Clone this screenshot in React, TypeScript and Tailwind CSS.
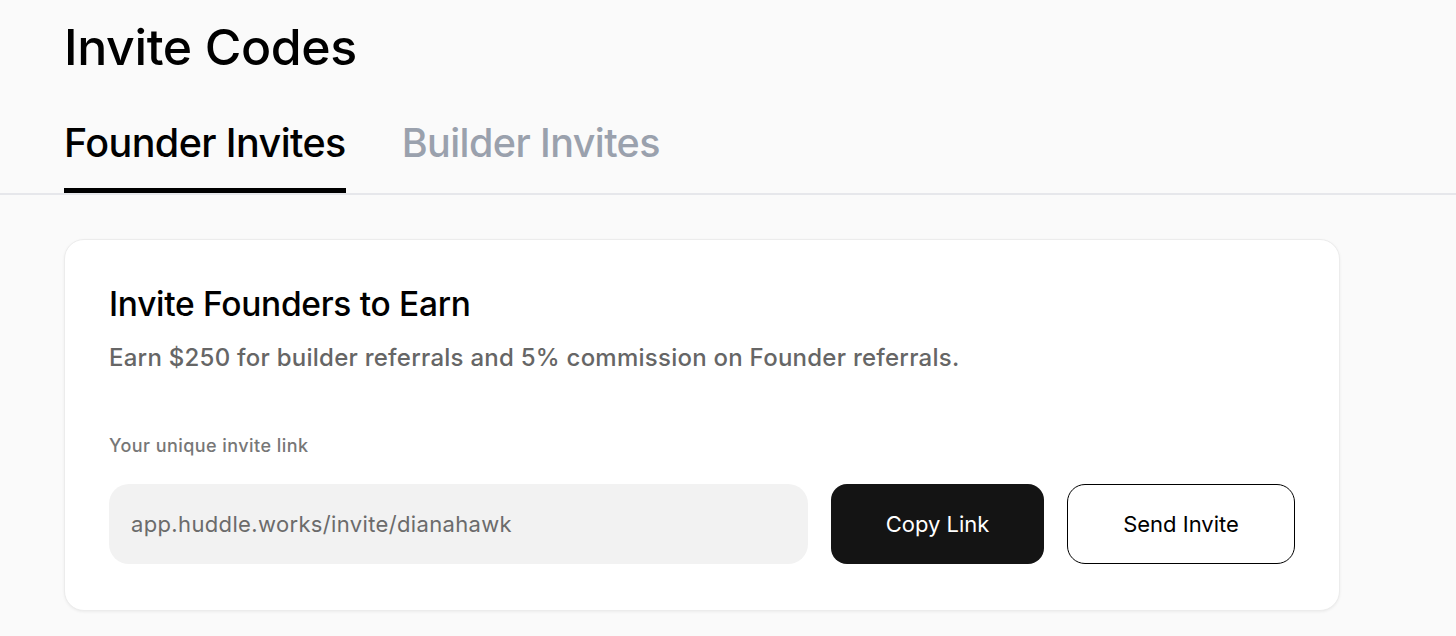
import React from "react";

export default function App() {
  return (
    <div className="min-h-[636px] w-full bg-[#fafafa] font-['Inter',sans-serif] overflow-hidden">
      <div className="pl-16 pt-[17px]">
        <h1 className="text-[50px] leading-[60px] font-medium text-black tracking-[-0.4px]">Invite Codes</h1>
      </div>
      <div className="mt-[42px] flex border-b-2 border-[#e6e7eb] pl-16">
        <div className="flex gap-[56px]">
          <button className="flex flex-col text-[39.5px] leading-[48px] font-medium text-black tracking-[-0.6px]">
            <span>Founder Invites</span>
            <span className="mt-[21px] block h-[5px] w-full bg-black" />
          </button>
          <button className="flex flex-col text-[39.5px] leading-[48px] font-medium text-[#9aa1ad] tracking-[-0.6px]">
            <span>Builder Invites</span>
          </button>
        </div>
      </div>
      <div className="pl-16 pt-[44px]">
        <div className="w-[1276px] rounded-[20px] bg-white border border-[#ececec] shadow-[0_1px_3px_rgba(0,0,0,0.06)] px-[44px] pt-[44px] pb-[46px]">
          <h2 className="text-[33.5px] leading-[40px] font-medium text-black tracking-[-0.3px]">Invite Founders to Earn</h2>
          <p className="mt-[18px] text-[24px] leading-[32px] font-medium text-[#666666] tracking-[0.25px]">
            Earn $250 for builder referrals and 5% commission on Founder referrals.
          </p>
          <div className="mt-[60px] text-[18px] leading-[24px] font-medium text-[#777777] tracking-[0.45px]">Your unique invite link</div>
          <div className="mt-[26px] flex gap-[23px]">
            <div className="flex h-[80px] w-[699px] items-center rounded-[20px] bg-[#f2f2f2] px-[22px] text-[22px] text-[#6b6b6b] tracking-[0.35px]">
              app.huddle.works/invite/dianahawk
            </div>
            <button className="h-[80px] w-[213px] rounded-[16px] bg-[#141414] text-[22px] font-normal text-white">
              Copy Link
            </button>
            <button className="h-[80px] w-[228px] rounded-[18px] border border-black bg-white text-[22px] font-normal text-black">
              Send Invite
            </button>
          </div>
        </div>
      </div>
    </div>
  );
}
